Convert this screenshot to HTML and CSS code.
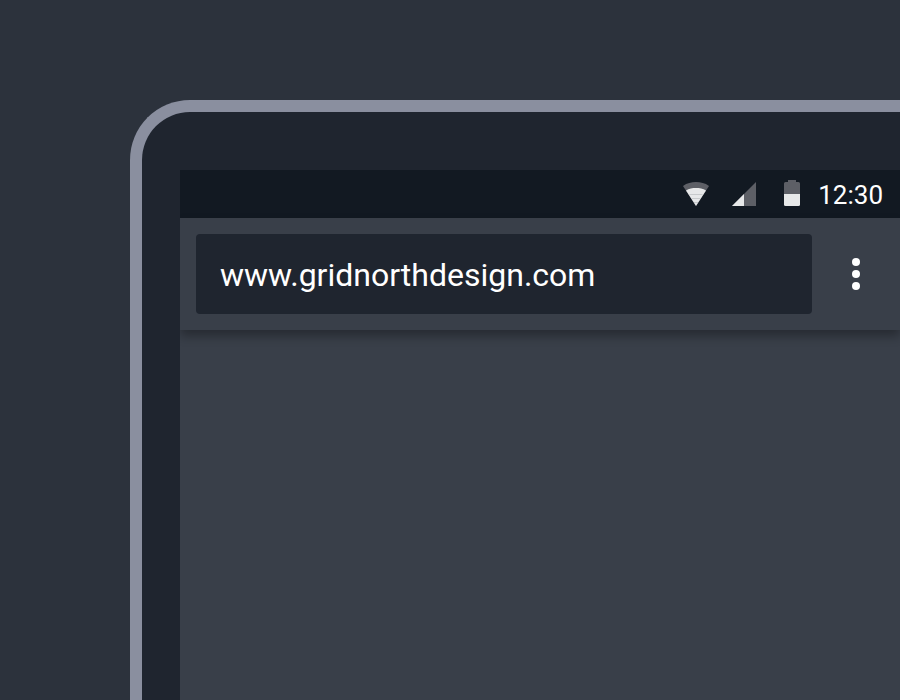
FILE: index.html
```html
<!DOCTYPE html>
<html lang="en">
<head>
<meta charset="utf-8">
<meta name="viewport" content="width=device-width, initial-scale=1">
<title>Browser</title>
<link rel="stylesheet" href="styles.css">
</head>
<body>
<main class="stage">
  <div class="device">
    <div class="screen">
      <div class="status-bar">
        <svg class="status-icon" viewBox="0 0 32 32" aria-hidden="true">
          <path class="dim" d="M3 10C7 7 11.300 6 16 6s9 1 13 4L16 30z"/>
          <path class="lit" d="M6 14.500C9 12.600 12.500 12 16 12s7 .6 10 2.500L16 30z"/>
          <path class="arc" d="M9.500 18.500h13M11.500 22.500h9M14 26.500h4"/>
        </svg>
        <svg class="status-icon" viewBox="0 0 32 32" aria-hidden="true">
          <path class="dim" d="M28 6v24H4z"/>
          <path class="lit" d="M16 18v12H4z"/>
        </svg>
        <svg class="status-icon" viewBox="0 0 32 32" aria-hidden="true">
          <path class="dim" d="M12 4h8v2h2.500q1.500 0 1.500 1.500V18H8V7.500Q8 6 9.500 6H12z"/>
          <path class="lit" d="M8 18h16v10.500q0 1.500-1.500 1.500h-13Q8 30 8 28.500z"/>
        </svg>
        <time class="clock">12:30</time>
      </div>
      <header class="toolbar">
        <input class="address" type="text" aria-label="Address" value="www.gridnorthdesign.com" spellcheck="false">
        <button class="menu" type="button" aria-label="Menu">
          <svg class="dots" viewBox="0 0 8 32" aria-hidden="true">
            <circle cx="4" cy="4" r="4"/><circle cx="4" cy="16" r="4"/><circle cx="4" cy="28" r="4"/>
          </svg>
        </button>
      </header>
    </div>
  </div>
</main>
</body>
</html>
```
FILE: styles.css
```css
* { box-sizing: border-box; }

body {
  margin: 0;
  background: #2c323c;
  color: #fff;
  font-family: Roboto, sans-serif;
}

.stage {
  display: flex;
  min-height: 100vh;
  padding: 100px 0 0 130px;
}

.device {
  display: flex;
  flex: 1;
  border: solid #8a8f9f;
  border-width: 12px 0 0 12px;
  border-top-left-radius: 60px;
  padding: 58px 0 0 38px;
  background: #1f252f;
}

.screen {
  flex: 1;
  overflow: hidden;
  background: #393f49;
}

.status-bar {
  display: flex;
  align-items: flex-start;
  justify-content: flex-end;
  gap: 16px;
  height: 48px;
  padding: 6px 17px 0 0;
  background: #121922;
}

.status-icon {
  width: 32px;
  height: 32px;
}

.dim { fill: #5d5f66; }
.lit { fill: #e7e8e9; }

.arc {
  fill: none;
  stroke: #c8cacc;
  stroke-width: 1;
}

.clock {
  margin-left: -6px;
  font-size: 26px;
  line-height: 38px;
}

.toolbar {
  display: flex;
  align-items: center;
  gap: 16px;
  padding: 16px;
  background: #393f49;
  box-shadow: 0 6px 10px rgba(0, 0, 0, 0.32);
}

.address {
  flex: 1;
  min-width: 0;
  height: 80px;
  padding: 2px 24px 0;
  border: 0;
  border-radius: 4px;
  background: #1f252f;
  color: #fff;
  font: 32px Roboto, sans-serif;
}

.menu {
  display: grid;
  place-items: center;
  width: 56px;
  height: 56px;
  padding: 0;
  border: 0;
  background: none;
}

.dots {
  width: 8px;
  height: 32px;
  fill: #fff;
}
```
